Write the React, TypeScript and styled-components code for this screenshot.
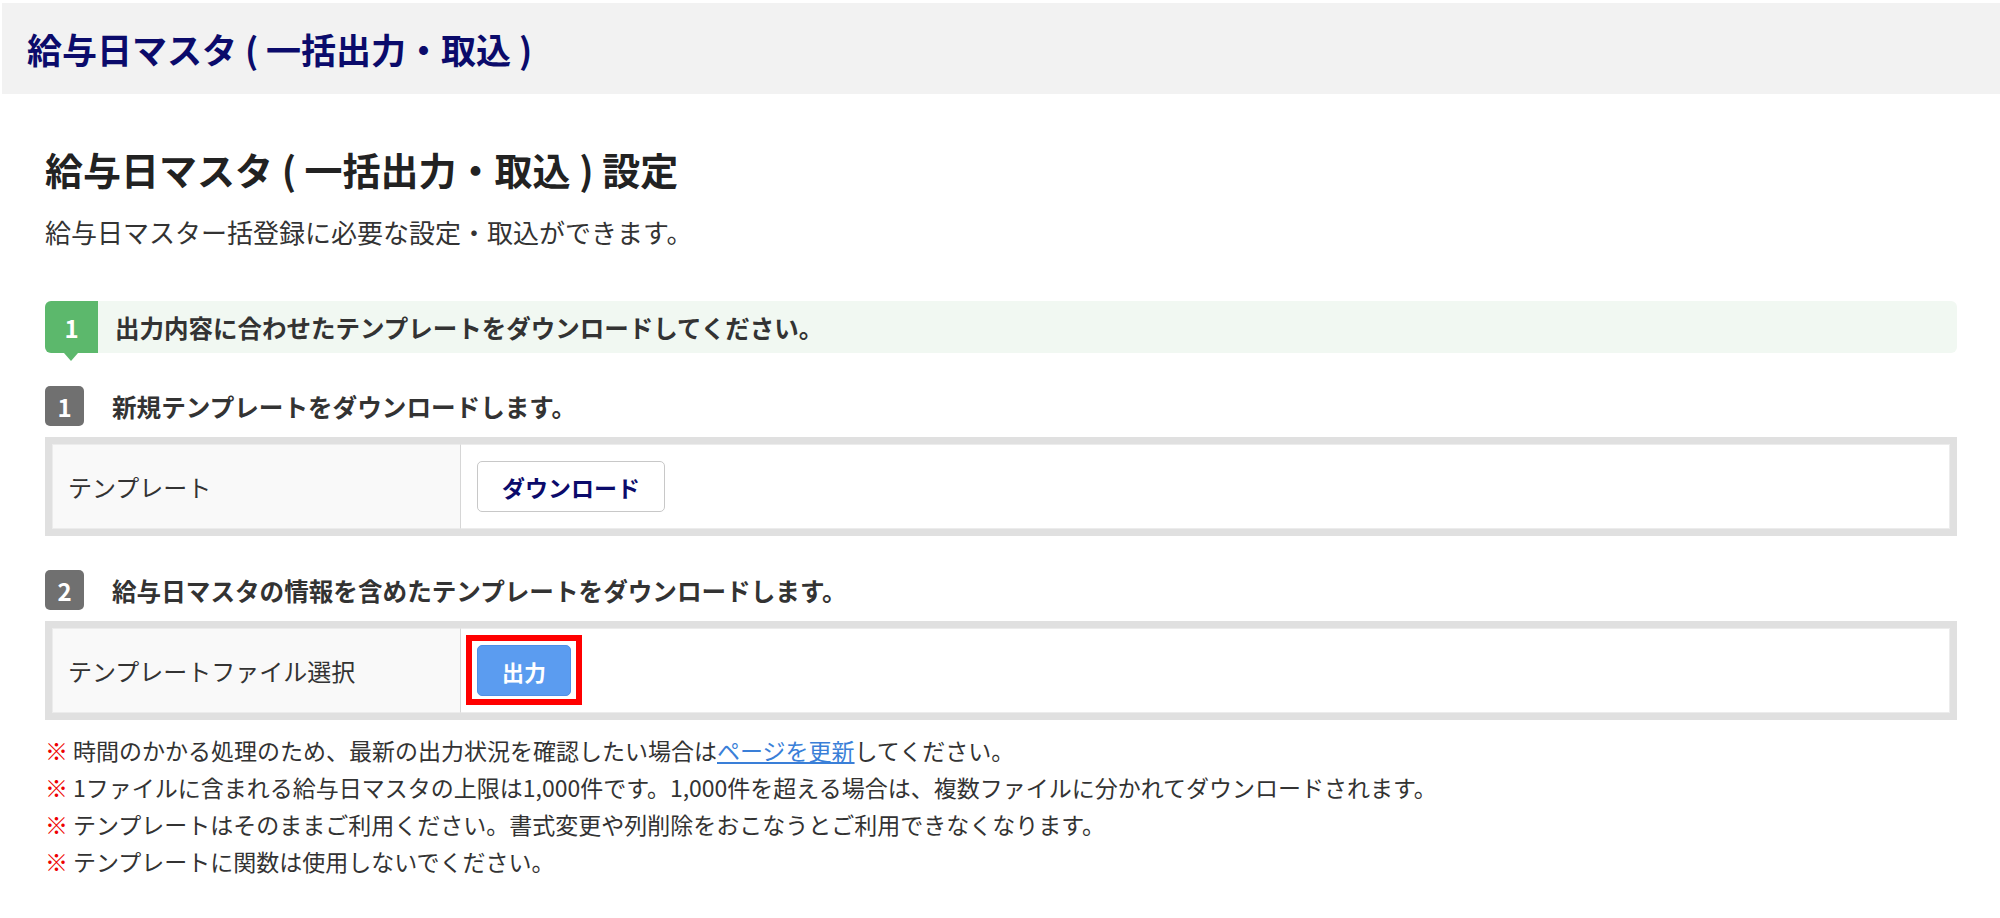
import React from 'react'
import styled, { createGlobalStyle } from 'styled-components'

const GlobalStyle = createGlobalStyle`
  body {
    margin: 0;
    background: #fff;
    font-family: "Noto Sans CJK JP", "Noto Sans", sans-serif;
    color: #333;
  }
`

const TitleBar = styled.div`
  margin: 3px 0 0 2px;
  height: 91px;
  background-color: #f2f2f2;
  display: flex;
  align-items: center;
  padding-left: 25px;
`

const TitleText = styled.h2`
  margin: 0;
  font-size: 35px;
  font-weight: 700;
  color: #0b0b6b;
  line-height: 1;
`

const Content = styled.div`
  padding: 0 43px 40px 45px;
`

const Heading = styled.h1`
  margin: 51px 0 0;
  font-size: 38px;
  line-height: 48px;
  font-weight: 700;
  color: #222;
`

const Lead = styled.p`
  margin: 21px 0 0;
  font-size: 26px;
  line-height: 36px;
  color: #333;
`

const StepBar = styled.div`
  margin-top: 51px;
  height: 52px;
  display: flex;
  align-items: center;
  background-color: #f1f8f2;
  border-radius: 6px;
`

const StepBadge = styled.div`
  position: relative;
  width: 53px;
  height: 100%;
  display: flex;
  align-items: center;
  justify-content: center;
  background-color: #5cb86c;
  border-radius: 6px 0 0 6px;
  color: #fff;
  font-size: 24px;
  font-weight: 700;

  &::after {
    content: '';
    position: absolute;
    left: 19px;
    bottom: -8px;
    border-left: 7px solid transparent;
    border-right: 7px solid transparent;
    border-top: 8px solid #5cb86c;
  }
`

const StepText = styled.span`
  margin-left: 17px;
  font-size: 24.5px;
  font-weight: 700;
  color: #333;
`

interface SubStepProps {
  $gap?: number
}

const SubStep = styled.div<SubStepProps>`
  margin-top: ${({ $gap }) => $gap ?? 33}px;
  height: 40px;
  display: flex;
  align-items: center;
`

const SubBadge = styled.div`
  width: 39px;
  height: 40px;
  display: flex;
  align-items: center;
  justify-content: center;
  background-color: #707070;
  border-radius: 5px;
  color: #fff;
  font-size: 24px;
  font-weight: 700;
`

const SubText = styled.span`
  margin-left: 28px;
  font-size: 24.6px;
  font-weight: 700;
  color: #333;
`

const Table = styled.table`
  margin-top: 11px;
  width: 100%;
  border: 7px solid #e0e0e0;
  border-collapse: separate;
  border-spacing: 0;
`

const LabelCell = styled.th`
  width: 392px;
  padding: 0 0 0 15px;
  background-color: #f9f9f9;
  border: 1px solid #ececec;
  border-right: 1px solid #d6d6d6;
  text-align: left;
  font-size: 24px;
  font-weight: 400;
  color: #333;
`

const ValueCell = styled.td`
  padding: 16px 16px;
  border: 1px solid #ececec;
  border-left: none;
  background-color: #fff;
`

interface ActionButtonProps {
  $primary?: boolean
  $highlighted?: boolean
}

const ActionButton = styled.button<ActionButtonProps>`
  position: relative;
  height: 51px;
  padding: 0 24px;
  border-radius: 5px;
  font-family: inherit;
  font-size: ${({ $primary }) => ($primary ? 22 : 23)}px;
  font-weight: 700;
  cursor: pointer;
  border: 1px solid ${({ $primary }) => ($primary ? '#4f90e6' : '#c8c8c8')};
  background-color: ${({ $primary }) => ($primary ? '#5b9cf0' : '#fff')};
  color: ${({ $primary }) => ($primary ? '#fff' : '#0b0b6b')};

  &::after {
    content: '';
    display: ${({ $highlighted }) => ($highlighted ? 'block' : 'none')};
    position: absolute;
    top: -11px;
    bottom: -10px;
    left: -12px;
    right: -12px;
    border: 6px solid #ff0000;
    pointer-events: none;
  }
`

const Notes = styled.ul`
  margin: 12px 0 0;
  padding: 0;
  list-style: none;
`

const Note = styled.li`
  font-size: 23px;
  line-height: 37px;
  color: #333;
`

const Mark = styled.span`
  color: #ee0000;
  font-weight: 700;
  margin-right: 5px;
`

const Link = styled.a`
  color: #3a7fd8;
  text-decoration: underline;
`

const notes: React.ReactNode[] = [
  <>
    時間のかかる処理のため、最新の出力状況を確認したい場合は<Link href="#">ページを更新</Link>してください。
  </>,
  '1ファイルに含まれる給与日マスタの上限は1,000件です。1,000件を超える場合は、複数ファイルに分かれてダウンロードされます。',
  'テンプレートはそのままご利用ください。書式変更や列削除をおこなうとご利用できなくなります。',
  'テンプレートに関数は使用しないでください。',
]

const App = () => {
  return (
    <>
      <GlobalStyle />
      <TitleBar>
        <TitleText>給与日マスタ ( 一括出力・取込 )</TitleText>
      </TitleBar>
      <Content>
        <Heading>給与日マスタ ( 一括出力・取込 ) 設定</Heading>
        <Lead>給与日マスター括登録に必要な設定・取込ができます。</Lead>

        <StepBar>
          <StepBadge>1</StepBadge>
          <StepText>出力内容に合わせたテンプレートをダウンロードしてください。</StepText>
        </StepBar>

        <SubStep>
          <SubBadge>1</SubBadge>
          <SubText>新規テンプレートをダウンロードします。</SubText>
        </SubStep>
        <Table>
          <tbody>
            <tr>
              <LabelCell>テンプレート</LabelCell>
              <ValueCell>
                <ActionButton>ダウンロード</ActionButton>
              </ValueCell>
            </tr>
          </tbody>
        </Table>

        <SubStep $gap={34}>
          <SubBadge>2</SubBadge>
          <SubText>給与日マスタの情報を含めたテンプレートをダウンロードします。</SubText>
        </SubStep>
        <Table>
          <tbody>
            <tr>
              <LabelCell>テンプレートファイル選択</LabelCell>
              <ValueCell>
                <ActionButton $primary $highlighted>
                  出力
                </ActionButton>
              </ValueCell>
            </tr>
          </tbody>
        </Table>

        <Notes>
          {notes.map((n, i) => (
            <Note key={i}>
              <Mark>※</Mark>
              {n}
            </Note>
          ))}
        </Notes>
      </Content>
    </>
  )
}

export default App
